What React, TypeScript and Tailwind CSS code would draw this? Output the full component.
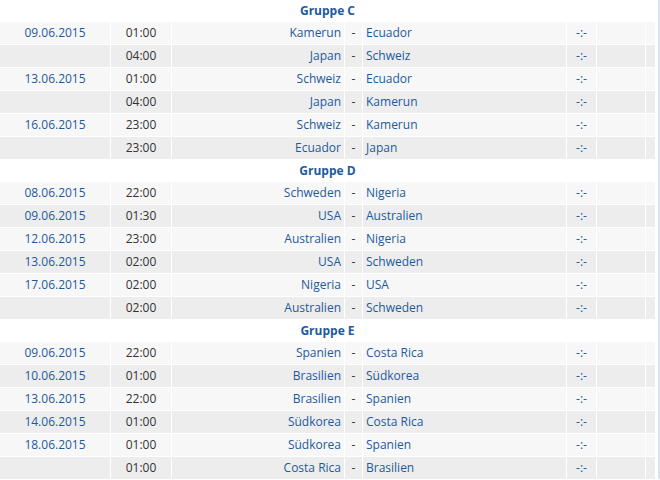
const groups = [
  {
    name: "Gruppe C",
    games: [
      ["09.06.2015", "01:00", "Kamerun", "Ecuador"],
      ["", "04:00", "Japan", "Schweiz"],
      ["13.06.2015", "01:00", "Schweiz", "Ecuador"],
      ["", "04:00", "Japan", "Kamerun"],
      ["16.06.2015", "23:00", "Schweiz", "Kamerun"],
      ["", "23:00", "Ecuador", "Japan"],
    ],
  },
  {
    name: "Gruppe D",
    games: [
      ["08.06.2015", "22:00", "Schweden", "Nigeria"],
      ["09.06.2015", "01:30", "USA", "Australien"],
      ["12.06.2015", "23:00", "Australien", "Nigeria"],
      ["13.06.2015", "02:00", "USA", "Schweden"],
      ["17.06.2015", "02:00", "Nigeria", "USA"],
      ["", "02:00", "Australien", "Schweden"],
    ],
  },
  {
    name: "Gruppe E",
    games: [
      ["09.06.2015", "22:00", "Spanien", "Costa Rica"],
      ["10.06.2015", "01:00", "Brasilien", "Südkorea"],
      ["13.06.2015", "22:00", "Brasilien", "Spanien"],
      ["14.06.2015", "01:00", "Südkorea", "Costa Rica"],
      ["18.06.2015", "01:00", "Südkorea", "Spanien"],
      ["", "01:00", "Costa Rica", "Brasilien"],
    ],
  },
];

const cols = "grid grid-cols-[110px_60px_172px_17px_203px_29px_48px_9px] gap-x-px";

export default function App() {
  return (
    <div
      className="w-[660px] h-[480px] overflow-hidden bg-white text-[12px] text-[#1d5a9c]"
      style={{ fontFamily: "'Open Sans', 'Noto Sans', sans-serif" }}
    >
      <div className="w-[660px] border-r-2 border-[#d6e4f3] pr-[3px]">
        {groups.map((g) => (
          <div key={g.name}>
            <div className="h-[21px] mb-px flex items-center justify-center font-bold text-[#1d5a9c]">
              {g.name}
            </div>
            {g.games.map((r, i) => (
              <div
                key={i}
                className={`${cols} h-[22px] mb-px leading-[22px] ${i % 2 === 0 ? "[&>div]:bg-[#f7f7f7]" : "[&>div]:bg-[#ededed]"}`}
              >
                <div className="text-center">{r[0]}</div>
                <div className="text-center text-[#333]">{r[1]}</div>
                <div className="text-right pr-[3px]">{r[2]}</div>
                <div className="text-center text-[#333]">-</div>
                <div className="pl-[3px]">{r[3]}</div>
                <div className="text-center">-:-</div>
                <div></div>
                <div></div>
              </div>
            ))}
          </div>
        ))}
      </div>
    </div>
  );
}
